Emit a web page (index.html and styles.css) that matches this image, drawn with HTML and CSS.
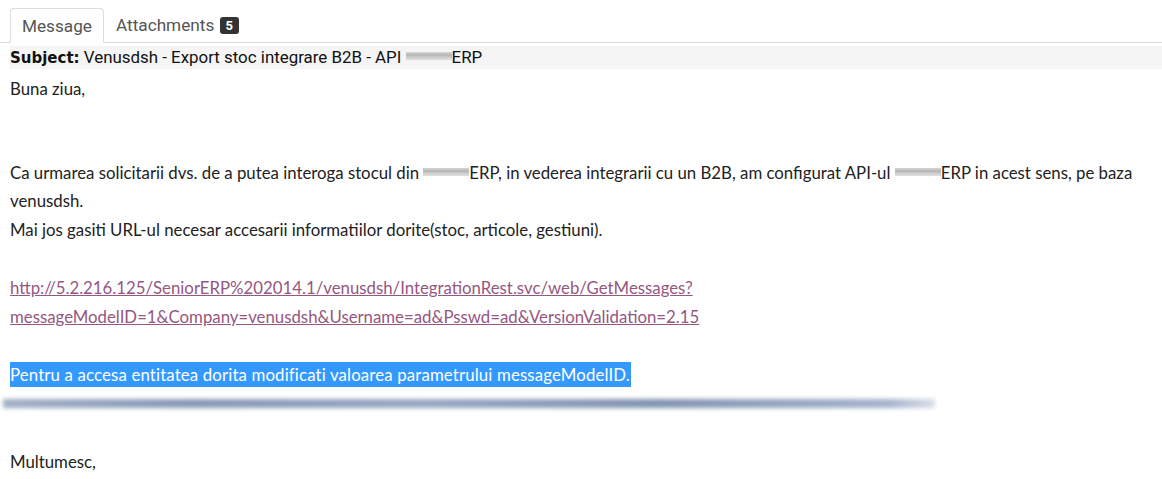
FILE: index.html
```html
<!DOCTYPE html>
<html lang="ro">
<head>
  <meta charset="UTF-8" />
  <title>Message</title>
  <link rel="stylesheet" href="styles.css">
</head>
<body>
  <ul class="tabs">
    <li class="tab active">Message</li>
    <li class="tab">Attachments <span class="badge">5</span></li>
  </ul>

  <div class="subject"><strong>Subject:</strong> Venusdsh - Export stoc integrare B2B - API <span class="redact"></span>ERP</div>

  <div class="mail">
    <p class="line">Buna ziua,</p>
    <div class="gap big"></div>
    <p class="line">Ca urmarea solicitarii dvs. de a putea interoga stocul din <span class="redact"></span>ERP, in vederea integrarii cu un B2B, am configurat API-ul <span class="redact"></span>ERP in acest sens, pe baza<br>venusdsh.</p>
    <p class="line">Mai jos gasiti URL-ul necesar accesarii informatiilor dorite(stoc, articole, gestiuni).</p>
    <div class="gap"></div>
    <p class="line"><a class="link" href="#">http://5.2.216.125/SeniorERP%202014.1/venusdsh/IntegrationRest.svc/web/GetMessages?<br>messageModelID=1&amp;Company=venusdsh&amp;Username=ad&amp;Psswd=ad&amp;VersionValidation=2.15</a></p>
    <div class="gap"></div>
    <p class="line"><span class="selected">Pentru a accesa entitatea dorita modificati valoarea parametrului messageModelID.</span></p>
    <div class="line"><div class="smudge"></div></div>
    <div class="gap wide"></div>
    <p class="line">Multumesc,</p>
  </div>
</body>
</html>
```

FILE: styles.css
```css
body {
  margin: 0;
  padding: 8px 0 0;
  background: #ffffff;
  font-family: Roboto, 'Liberation Sans', Arial, sans-serif;
  color: #222;
}

.tabs {
  display: flex;
  list-style: none;
  margin: 0;
  padding: 0 0 0 10px;
  border-bottom: 1px solid #dddddd;
  height: 34px;
}

.tab {
  padding: 0 11px;
  font-size: 17.2px;
  line-height: 33px;
  color: #555;
  border: 1px solid transparent;
  border-radius: 4px 4px 0 0;
  margin-bottom: -1px;
}

.tab.active {
  background: #fff;
  border-color: #dddddd #dddddd transparent;
  padding-top: 1px;
  line-height: 32px;
}

.badge {
  display: inline-block;
  background: #333;
  color: #fff;
  font-size: 13px;
  font-weight: bold;
  line-height: 17px;
  padding: 0 6px;
  border-radius: 3px;
  vertical-align: 1px;
  margin-left: 1px;
}

.subject {
  margin: 3px 0 0 10px;
  background: #f5f5f5;
  font-size: 16.9px;
  line-height: 22px;
  color: #111;
}

.subject strong {
  font-family: Verdana, 'DejaVu Sans', sans-serif;
  font-size: 15px;
}

.redact {
  display: inline-block;
  width: 46px;
  height: 8px;
  vertical-align: 3px;
  background: linear-gradient(#d6d6d6, #b4b4b4 40%, #c9c9c9 60%, #e0e0e0);
}

.mail {
  padding: 6px 10px 0;
  width: 1142px;
  font-family: Lato, 'Noto Sans', sans-serif;
  font-size: 16.8px;
  color: #222;
}

.line {
  margin: 0;
  line-height: 28.5px;
}

.gap {
  height: 30px;
}

.gap.big {
  height: 55px;
}

.gap.wide {
  height: 40px;
}

.link {
  color: #95577f;
  text-decoration: underline;
}

.selected {
  background: #3399ff;
  color: #fff;
  padding: 2px 1px 2px 0;
  letter-spacing: 0.15px;
}

.smudge {
  margin: 9px 0 0 -7px;
  width: 932px;
  height: 9px;
  background: linear-gradient(90deg, #8a9cba, #6a7fa4 20%, #7d92b4 45%, #62799f 70%, #8ea0bf 95%, #d0d8e4);
  filter: blur(2px);
  opacity: 0.8;
}
```
